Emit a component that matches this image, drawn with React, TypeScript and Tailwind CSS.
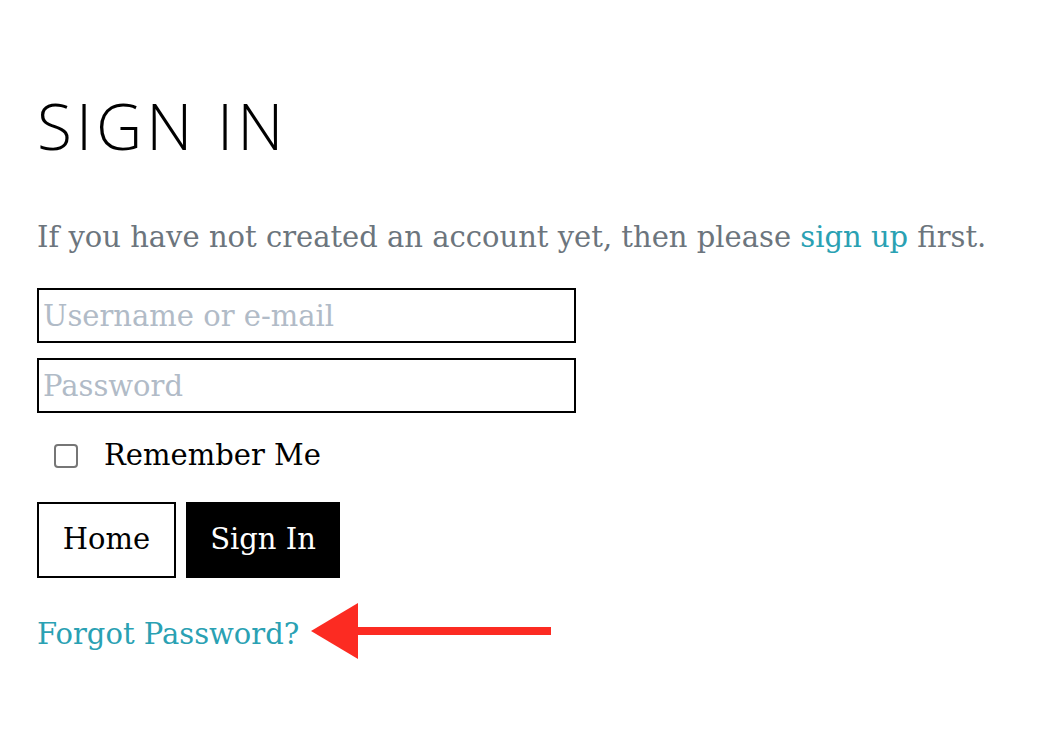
import React from "react";

const serif = { fontFamily: '"DejaVu Serif", "Liberation Serif", serif' };

const Arrow = () => (
  <svg width="240" height="58" viewBox="0 0 240 58" className="block mb-[8px]">
    <rect x="44" y="25" width="196" height="8" fill="#fc2b22" />
    <polygon points="0,29 47,1 47,57" fill="#fc2b22" />
  </svg>
);

export default function App() {
  return (
    <div className="min-h-screen bg-white px-[37px] pt-[94px]" style={serif}>
      <h1
        className="text-[64px] leading-none font-light tracking-[4px] text-black"
        style={{ fontFamily: '"Open Sans", sans-serif' }}
      >
        SIGN IN
      </h1>
      <p className="mt-[61px] text-[29px] leading-[36px] text-[#6c757d]">
        If you have not created an account yet, then please{" "}
        <a href="#" className="text-[#2aa1b3]">
          sign up
        </a>{" "}
        first.
      </p>
      <form className="mt-[33px] flex flex-col">
        <input
          type="text"
          placeholder="Username or e-mail"
          className="w-[539px] h-[55px] border-2 border-black px-[4px] text-[29px] placeholder:text-[#b1bbc7] outline-none"
        />
        <input
          type="password"
          placeholder="Password"
          className="mt-[15px] w-[539px] h-[55px] border-2 border-black px-[4px] text-[29px] placeholder:text-[#b1bbc7] outline-none"
        />
        <label className="mt-[21px] flex items-center gap-[26px] pl-[17px] text-[29px] text-black">
          <span className="w-[24px] h-[24px] rounded-[4px] border-2 border-[#767676] bg-white" />
          Remember Me
        </label>
        <div className="mt-[24px] flex gap-[10px]">
          <button
            type="button"
            className="w-[139px] h-[76px] border-2 border-black bg-white text-[29px] text-black"
          >
            Home
          </button>
          <button
            type="button"
            className="w-[154px] h-[76px] bg-black text-[29px] text-white"
          >
            Sign In
          </button>
        </div>
        <div className="mt-[24px] flex items-center gap-[12px]">
          <a href="#" className="text-[29px] text-[#2aa1b3]">
            Forgot Password?
          </a>
          <Arrow />
        </div>
      </form>
    </div>
  );
}
